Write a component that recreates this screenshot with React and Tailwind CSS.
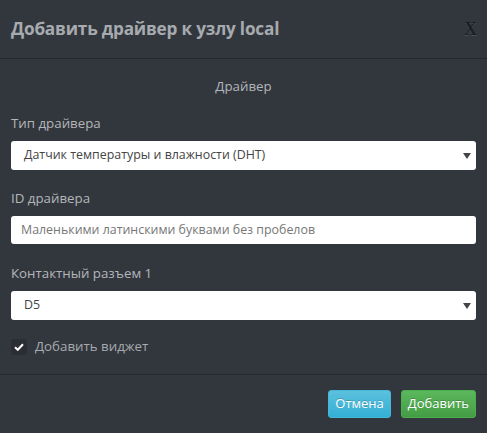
import React from 'react';

const Caret = () => (
  <svg width="8" height="6" viewBox="0 0 8 6" className="absolute right-[5px] top-1/2 -translate-y-1/2">
    <path d="M0 0 L8 0 L4 6 Z" fill="#444" />
  </svg>
);

const Label = ({ children }) => (
  <div className="text-[13.3px] text-[#b4b6b9] mb-[8px] leading-[20px]">{children}</div>
);

export default function App() {
  return (
    <div
      className="w-[487px] h-[433px] bg-[#32373e] flex flex-col"
      style={{ fontFamily: '"Open Sans", "DejaVu Sans", sans-serif' }}
    >
      {/* Header */}
      <div className="h-[59px] border-b border-[#25292e] flex items-center justify-between pl-[11px] pr-[10px]">
        <h4 className="text-[17.2px] font-bold text-[#a7aaae] tracking-[-0.2px]">Добавить драйвер к узлу local</h4>
        <span
          className="text-[18px] font-bold text-[#1c1f23]"
          style={{ fontFamily: '"Liberation Serif", serif', textShadow: '0 1px 0 #4a4f56' }}
        >
          X
        </span>
      </div>

      {/* Body */}
      <div className="px-[11px] pt-[17px] flex-1 border-b border-[#25292e]">
        <div className="text-center text-[13.3px] text-[#b4b6b9] leading-[20px] mb-[17px]">Драйвер</div>

        <Label>Тип драйвера</Label>
        <div className="relative h-[29px] bg-white rounded-[3px] flex items-center pl-[13px] text-[12.4px] text-[#444] mb-[18px]">
          Датчик температуры и влажности (DHT)
          <Caret />
        </div>

        <Label>ID драйвера</Label>
        <div className="h-[28px] bg-white rounded-[3px] flex items-center pl-[10px] text-[12.4px] text-[#777] mb-[19px]">
          Маленькими латинскими буквами без пробелов
        </div>

        <Label>Контактный разъем 1</Label>
        <div className="relative h-[29px] bg-white rounded-[3px] flex items-center pl-[13px] text-[12.4px] text-[#444] mb-[17px]">
          D5
          <Caret />
        </div>

        <div className="flex items-center gap-[8px]">
          <div className="w-[16px] h-[16px] rounded-[3px] bg-[#2a2e34] flex items-center justify-center">
            <svg width="10" height="8" viewBox="0 0 10 8">
              <path d="M1 4.2 L3.8 6.8 L9 1.2" stroke="#fff" strokeWidth="2" fill="none" />
            </svg>
          </div>
          <span className="text-[13.3px] text-[#a7aaae]">Добавить виджет</span>
        </div>
      </div>

      {/* Footer */}
      <div className="h-[58px] flex items-center justify-end gap-[10px] pr-[11px] pb-[1px]">
        <button
          className="h-[28px] px-[6px] rounded-[3px] text-[13px] text-white border border-[#46b8da] bg-gradient-to-b from-[#5bc0de] to-[#31b0d5]"
          style={{ textShadow: '0 -1px 0 rgba(0,0,0,0.2)' }}
        >
          Отмена
        </button>
        <button
          className="h-[28px] px-[6px] rounded-[3px] text-[13px] text-white border border-[#4cae4c] bg-gradient-to-b from-[#5cb85c] to-[#449d44]"
          style={{ textShadow: '0 -1px 0 rgba(0,0,0,0.2)' }}
        >
          Добавить
        </button>
      </div>
    </div>
  );
}
